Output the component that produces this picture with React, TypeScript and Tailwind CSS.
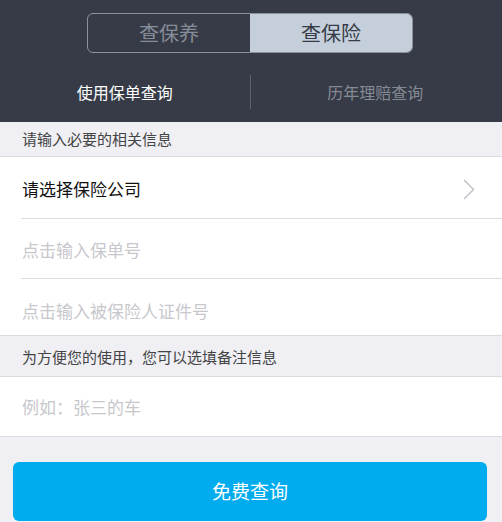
import React from "react";

const font = { fontFamily: '"Noto Sans CJK SC", "Noto Sans", sans-serif' };

export default function App() {
  return (
    <div className="w-[502px] h-[522px] overflow-hidden bg-[#efeff4] flex flex-col" style={font}>
      {/* Dark header */}
      <div className="bg-[#363b47] h-[122px] shrink-0">
        <div className="w-[500px] flex flex-col items-center pt-[13px]">
          <div className="w-[326px] h-[40px] flex rounded-[6px] border border-[#8c919b] overflow-hidden">
            <div className="flex-1 flex items-center justify-center text-[20px] text-[#878d98] leading-none">
              查保养
            </div>
            <div className="flex-1 flex items-center justify-center text-[20px] text-[#363b47] bg-[#c4cfdb] leading-none">
              查保险
            </div>
          </div>
          <div className="w-full mt-[22px] h-[34px] flex items-center">
            <div className="flex-1 flex items-center justify-center text-[16px] text-white">
              使用保单查询
            </div>
            <div className="w-px h-full bg-[#5c616c]" />
            <div className="flex-1 flex items-center justify-center text-[16px] text-[#858a95]">
              历年理赔查询
            </div>
          </div>
        </div>
      </div>

      {/* Section 1 header */}
      <div className="h-[35px] flex items-center pl-[22px] text-[15px] text-[#444] border-b border-[#dcdce0] shrink-0">
        请输入必要的相关信息
      </div>

      {/* Rows */}
      <div className="bg-white shrink-0">
        <div className="h-[61px] flex items-center pl-[22px] pr-[27px] pt-[3px]">
          <div className="flex-1 text-[17px] text-[#111]">请选择保险公司</div>
          <svg width="12" height="21" viewBox="0 0 12 21" fill="none">
            <path d="M1.5 1.5 L10.5 10.5 L1.5 19.5" stroke="#c3c6cb" strokeWidth="1.7" strokeLinecap="round" strokeLinejoin="round" />
          </svg>
        </div>
        <div className="ml-[21px] h-px bg-[#dcdce0]" />
        <div className="h-[59px] flex items-center pl-[22px] pt-[3px] text-[17px] text-[#c7c7cc]">
          点击输入保单号
        </div>
        <div className="ml-[21px] h-px bg-[#dcdce0]" />
        <div className="h-[56px] flex items-start pl-[22px] pt-[19px] text-[17px] text-[#c7c7cc] leading-[25px]">
          点击输入被保险人证件号
        </div>
      </div>

      {/* Section 2 header */}
      <div className="h-[42px] flex items-center pl-[22px] pt-[2px] text-[15px] text-[#444] border-t border-b border-[#dcdce0] shrink-0">
        为方便您的使用，您可以选填备注信息
      </div>

      <div className="bg-white h-[60px] flex items-center pl-[22px] pt-[1px] text-[17px] text-[#c7c7cc] border-b border-[#dcdce0] shrink-0">
        例如：张三的车
      </div>

      <div className="w-[500px] px-[13px] pt-[25px] shrink-0">
        <div className="h-[59px] rounded-[6px] bg-[#00abee] flex items-center justify-center text-[19px] text-white">
          免费查询
        </div>
      </div>
    </div>
  );
}
